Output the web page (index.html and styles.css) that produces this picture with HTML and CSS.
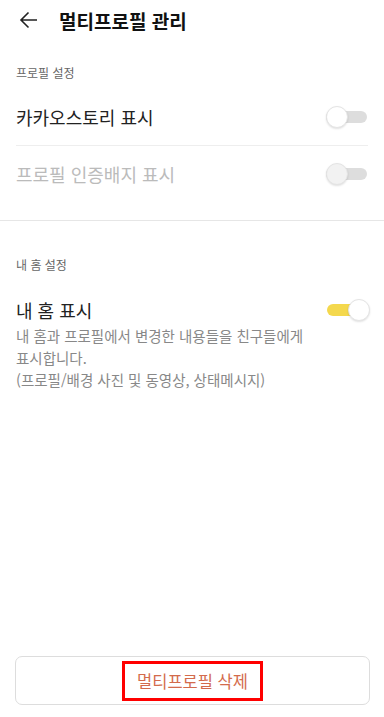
FILE: index.html
```html
<!DOCTYPE html>
<html lang="ko">
  <head>
    <meta charset="utf-8" />
    <title>멀티프로필 관리</title>
    <link rel="stylesheet" href="styles.css">
  </head>

  <body>
    <div class="page">
      <header class="top">
        <svg class="back" viewBox="0 0 20 20" width="20" height="20">
          <path d="M18 10H2M9.5 2.5L2 10l7.5 7.5" />
        </svg>
        <h1>멀티프로필 관리</h1>
      </header>

      <section class="group">
        <div class="label">프로필 설정</div>
        <div class="row">
          <span class="name">카카오스토리 표시</span>
          <span class="toggle"><span class="knob"></span></span>
        </div>
        <div class="row off">
          <span class="name">프로필 인증배지 표시</span>
          <span class="toggle"><span class="knob"></span></span>
        </div>
      </section>

      <section class="group second">
        <div class="label">내 홈 설정</div>
        <div class="row home">
          <span class="name">내 홈 표시</span>
          <span class="toggle on"><span class="knob"></span></span>
        </div>
        <p class="desc">내 홈과 프로필에서 변경한 내용들을 친구들에게<br>표시합니다.<br>(프로필/배경 사진 및 동영상, 상태메시지)</p>
      </section>

      <footer class="bottom">
        <button class="del"><span class="mark">멀티프로필 삭제</span></button>
      </footer>
    </div>
  </body>
</html>
```

FILE: styles.css
```css
* {
  margin: 0;
  padding: 0;
  box-sizing: border-box;
}
body {
  font-family: "Noto Sans CJK KR", Roboto, sans-serif;
  background: #fff;
  color: #222;
}

.page {
  display: flex;
  flex-direction: column;
  min-height: 100vh;
}

.top {
  display: flex;
  align-items: center;
  height: 40px;
  padding-left: 19px;
}
.back {
  fill: none;
  stroke: #222;
  stroke-width: 1.6;
}
.top h1 {
  font-size: 19px;
  font-weight: 700;
  color: #111;
  margin-left: 20px;
}

.group {
  padding: 24px 16px 0;
}
.group.second {
  border-top: 1px solid #e6e6e6;
  margin-top: 18px;
  padding-top: 35px;
}

.label {
  font-size: 12px;
  color: #666;
  line-height: 18px;
  margin-bottom: 6px;
}

.row {
  display: flex;
  align-items: center;
  justify-content: space-between;
  height: 57px;
  font-size: 18px;
}
.row + .row {
  border-top: 1px solid #eee;
}
.row.off {
  color: #bbb;
}
.row.home {
  height: 48px;
  margin-top: 12px;
}

.toggle {
  position: relative;
  width: 41px;
  height: 12px;
  border-radius: 6px;
  background: #ddd;
  margin-right: 1px;
}
.knob {
  position: absolute;
  left: 0;
  top: -5px;
  width: 22px;
  height: 22px;
  border-radius: 50%;
  background: #fff;
  border: 1px solid #e4e4e4;
  box-shadow: 0 1px 2px rgba(0, 0, 0, 0.12);
}
.off .knob {
  background: #f2f2f2;
}
.toggle.on {
  background: #f4d84d;
  margin-right: 0;
}
.toggle.on .knob {
  left: auto;
  right: -2px;
}

.desc {
  font-size: 14.5px;
  line-height: 22px;
  color: #888;
  margin-top: -9px;
}

.bottom {
  margin-top: auto;
  padding: 0 14px 12px 15px;
}
.del {
  width: 100%;
  height: 49px;
  background: #fff;
  border: 1px solid #ddd;
  border-radius: 7px;
  font-family: inherit;
  font-size: 16.5px;
  color: #d36b4c;
  display: flex;
  align-items: center;
  justify-content: center;
}
.mark {
  border: 3px solid #f00;
  padding: 0 12px;
  line-height: 34px;
}
```
